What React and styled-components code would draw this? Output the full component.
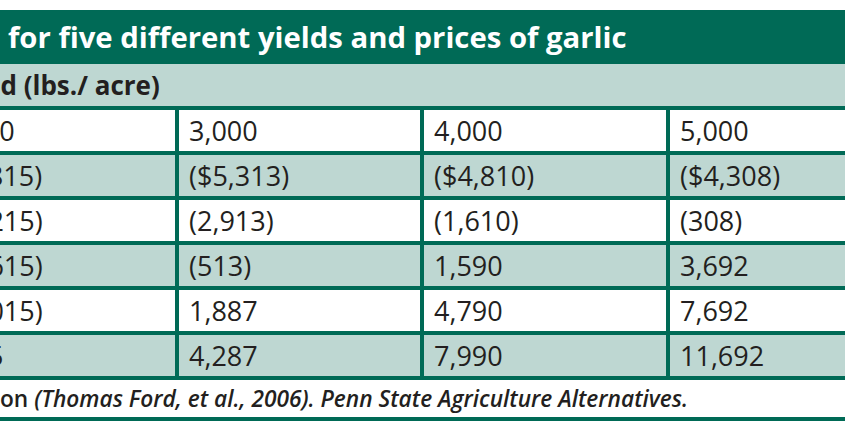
import React from 'react'
import styled, { createGlobalStyle } from 'styled-components'

const green = '#006a56'
const mint = '#bed7d2'
const ink = '#231f20'

const GlobalStyle = createGlobalStyle`
    html, body {
        margin: 0;
        padding: 0;
        background: #fff;
    }
    body {
        font-family: 'Open Sans', 'Noto Sans', sans-serif;
        color: ${ink};
    }
`

const Page = styled.div`
    width: 845px;
    height: 427px;
    padding-top: 10px;
    box-sizing: border-box;
    overflow: hidden;
    background: #fff;
`

const TitleBar = styled.div`
    height: 54px;
    background: ${green};
    color: #fff;
    display: flex;
    align-items: center;
    padding-left: 8px;
    font-weight: 700;
    font-size: 29.3px;
    white-space: nowrap;
`

const SubHeader = styled.div`
    height: 42px;
    background: ${mint};
    display: flex;
    align-items: center;
    font-weight: 700;
    font-size: 26px;
    white-space: nowrap;
    border-bottom: 4px solid ${green};
`

const SubText = styled.span`
    margin-left: -47px;
`

const Grid = styled.div`
    margin-left: -68px;
`

const Row = styled.div`
    display: grid;
    grid-template-columns: 243px 245px 246px 1fr;
    height: 41px;
    background: ${(p) => (p.$shaded ? mint : '#fff')};
    border-bottom: 4px solid ${green};
`

const Cell = styled.div`
    border-left: 4px solid ${green};
    padding-left: ${(p) => 10 + (p.$nudge || 0)}px;
    font-size: 27px;
    line-height: 41px;
    white-space: nowrap;
    overflow: hidden;
`

const Note = styled.div`
    height: 37px;
    display: flex;
    align-items: center;
    font-size: 22.7px;
    font-weight: 600;
    white-space: nowrap;
    border-bottom: 4px solid ${green};

    em {
        font-style: italic;
    }
`

// first column is typeset a little unevenly in the source, hence the nudge
const rows = [
    { nudge: 0, cells: ['2,000', '3,000', '4,000', '5,000'] },
    { nudge: -4, cells: ['($5,815)', '($5,313)', '($4,810)', '($4,308)'] },
    { nudge: 12, cells: ['(4,215)', '(2,913)', '(1,610)', '(308)'] },
    { nudge: 12, cells: ['(2,615)', '(513)', '1,590', '3,692'] },
    { nudge: 12, cells: ['(1,015)', '1,887', '4,790', '7,692'] },
    { nudge: 11, cells: ['585', '4,287', '7,990', '11,692'] },
]

export default function App() {
    return (
        <>
            <GlobalStyle />
            <Page>
                <TitleBar>for five different yields and prices of garlic</TitleBar>
                <SubHeader>
                    <SubText>Yield (lbs./ acre)</SubText>
                </SubHeader>
                <Grid>
                    {rows.map((r, i) => (
                        <Row key={i} $shaded={i % 2 === 1}>
                            {r.cells.map((v, j) => (
                                <Cell key={j} $nudge={j === 0 ? r.nudge : 0}>
                                    {v}
                                </Cell>
                            ))}
                        </Row>
                    ))}
                </Grid>
                <Note>
                    on&nbsp;<em>(Thomas Ford, et al., 2006). Penn State Agriculture Alternatives.</em>
                </Note>
            </Page>
        </>
    )
}
